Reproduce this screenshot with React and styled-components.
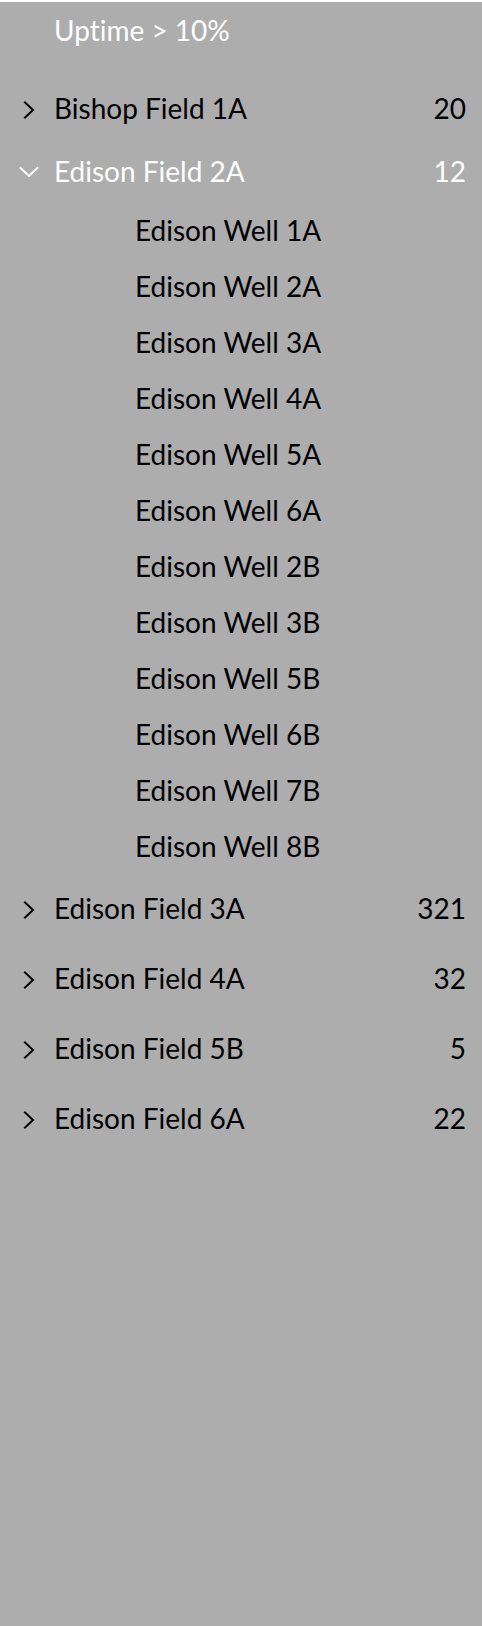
import React from "react";
import styled, { createGlobalStyle } from "styled-components";

const Global = createGlobalStyle`
  html, body {
    margin: 0;
    padding: 0;
    background: #ffffff;
  }
  body {
    font-family: Lato, "Liberation Sans", sans-serif;
  }
`;

const Panel = styled.div`
  margin-top: 2px;
  min-height: 1624px;
  background: #adadad;
  font-family: Lato, "Liberation Sans", sans-serif;
  font-size: 28px;
  line-height: 34px;
  font-variant-ligatures: none;
  font-feature-settings: "liga" 0, "clig" 0;
  color: #000;
`;

const Header = styled.div`
  height: 71px;
  box-sizing: border-box;
  padding: 11px 16px 0 54px;
  color: #fff;
`;

const FieldRow = styled.div`
  display: grid;
  grid-template-columns: 54px 1fr auto;
  align-items: start;
  box-sizing: border-box;
  height: ${(p) => (p.$open ? 59 : 70)}px;
  padding: ${(p) => (p.$open ? 11 : 18)}px 16px 0 0;
  color: ${(p) => (p.$open ? "#fff" : "#000")};
`;

const Toggle = styled.span`
  display: flex;
  justify-content: center;
  align-items: center;
  height: 34px;
  padding-left: 3px;
  padding-top: ${(p) => (p.$open ? 2 : 4)}px;
  box-sizing: border-box;
`;

const Label = styled.span`
  white-space: nowrap;
`;

const Count = styled.span`
  text-align: right;
`;

const WellList = styled.div`
  display: flex;
  flex-direction: column;
  margin-bottom: -1px;
`;

const WellRow = styled.div`
  height: 56px;
  box-sizing: border-box;
  padding: 11px 0 0 135px;
  color: #000;
`;

const Chevron = ({ open }) =>
  open ? (
    <svg width="20" height="12" viewBox="0 0 20 12" fill="none">
      <polyline
        points="1.5,2 10,10 18.5,2"
        stroke="#fff"
        strokeWidth="2"
        strokeLinecap="square"
        strokeLinejoin="miter"
      />
    </svg>
  ) : (
    <svg width="12" height="18" viewBox="0 0 12 18" fill="none">
      <polyline
        points="2,1.5 10,9 2,16.5"
        stroke="#000"
        strokeWidth="2"
        strokeLinecap="square"
        strokeLinejoin="miter"
      />
    </svg>
  );

const fields = [
  { name: "Bishop Field 1A", count: 20 },
  {
    name: "Edison Field 2A",
    count: 12,
    open: true,
    wells: [
      "Edison Well 1A",
      "Edison Well 2A",
      "Edison Well 3A",
      "Edison Well 4A",
      "Edison Well 5A",
      "Edison Well 6A",
      "Edison Well 2B",
      "Edison Well 3B",
      "Edison Well 5B",
      "Edison Well 6B",
      "Edison Well 7B",
      "Edison Well 8B",
    ],
  },
  { name: "Edison Field 3A", count: 321 },
  { name: "Edison Field 4A", count: 32 },
  { name: "Edison Field 5B", count: 5 },
  { name: "Edison Field 6A", count: 22 },
];

export default function App() {
  return (
    <>
      <Global />
      <Panel>
        <Header>Uptime &gt; 10%</Header>
        {fields.map((f) => (
          <React.Fragment key={f.name}>
            <FieldRow $open={f.open}>
              <Toggle $open={f.open}>
                <Chevron open={f.open} />
              </Toggle>
              <Label>{f.name}</Label>
              <Count>{f.count}</Count>
            </FieldRow>
            {f.open && (
              <WellList>
                {f.wells.map((w) => (
                  <WellRow key={w}>{w}</WellRow>
                ))}
              </WellList>
            )}
          </React.Fragment>
        ))}
      </Panel>
    </>
  );
}
